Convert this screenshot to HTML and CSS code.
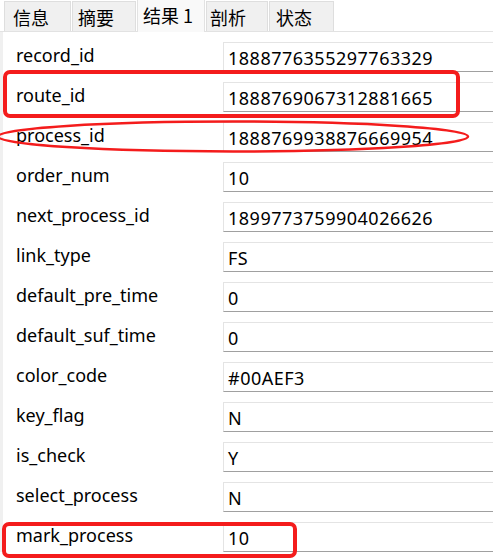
FILE: index.html
```html
<!DOCTYPE html>
<html lang="zh">
<head>
<meta charset="utf-8">
<link rel="stylesheet" href="styles.css">
</head>
<body>
<div class="page">
  <div class="tabs">
    <div class="tab t1">信息</div>
    <div class="tab t2">摘要</div>
    <div class="tab t3 active">结果 1</div>
    <div class="tab t4">剖析</div>
    <div class="tab t5">状态</div>
  </div>
  <div class="content">
    <div class="row"><div class="label">record_id</div><div class="box">1888776355297763329</div></div>
    <div class="row"><div class="label">route_id</div><div class="box">1888769067312881665</div></div>
    <div class="row"><div class="label">process_id</div><div class="box">1888769938876669954</div></div>
    <div class="row"><div class="label">order_num</div><div class="box">10</div></div>
    <div class="row"><div class="label">next_process_id</div><div class="box">1899773759904026626</div></div>
    <div class="row"><div class="label">link_type</div><div class="box">FS</div></div>
    <div class="row"><div class="label">default_pre_time</div><div class="box">0</div></div>
    <div class="row"><div class="label">default_suf_time</div><div class="box">0</div></div>
    <div class="row"><div class="label">color_code</div><div class="box">#00AEF3</div></div>
    <div class="row"><div class="label">key_flag</div><div class="box">N</div></div>
    <div class="row"><div class="label">is_check</div><div class="box">Y</div></div>
    <div class="row"><div class="label">select_process</div><div class="box">N</div></div>
    <div class="row"><div class="label">mark_process</div><div class="box">10</div></div>
  </div>
  <svg class="marks" width="493" height="559" viewBox="0 0 493 559">
    <rect x="5" y="72" width="453" height="44" rx="5" ry="5" fill="none" stroke="#f41c1c" stroke-width="4"/>
    <ellipse cx="233" cy="136.5" rx="235" ry="15" fill="none" stroke="#f41c1c" stroke-width="2.5"/>
    <rect x="4" y="524" width="291" height="32" rx="5" ry="5" fill="none" stroke="#f41c1c" stroke-width="4"/>
  </svg>
</div>
</body>
</html>
```

FILE: styles.css
```css
html, body {
  margin: 0;
  padding: 0;
  background: #ffffff;
}
.page {
  position: relative;
  width: 493px;
  height: 559px;
  overflow: hidden;
  font-family: "Noto Sans", "Noto Sans CJK SC", sans-serif;
  color: #000;
}
.tabs {
  display: flex;
  align-items: flex-end;
  height: 32px;
  padding-left: 4px;
  border-bottom: 1px solid #e2e2e2;
  box-sizing: border-box;
}
.tab {
  box-sizing: border-box;
  height: 30px;
  background: #f0f0f0;
  border: 1px solid #dedede;
  border-bottom: none;
  margin-right: 1px;
  font-family: "Noto Sans CJK SC", sans-serif;
  font-size: 18px;
  line-height: 30px;
  padding-left: 8px;
}
.t1 { width: 67px; }
.t2 { width: 64px; padding-left: 5px; }
.t3 { width: 68px; padding-left: 5px; }
.t4 { width: 62px; padding-left: 3px; }
.t5 { width: 65px; padding-left: 6px; }
.tab.active {
  background: #f9f9f9;
  margin-bottom: -1px;
  height: 33px;
  line-height: 31px;
  border-color: #e2e2e2;
}
.content {
  border-left: 3px solid #f0f0f0;
}
.row {
  display: grid;
  grid-template-columns: 207px 1fr;
  height: 40px;
  padding-left: 13px;
}
.label {
  font-size: 18px;
  line-height: 28px;
  padding-top: 9px;
  white-space: nowrap;
}
.box {
  margin-top: 10px;
  height: 30px;
  box-sizing: border-box;
  border-top: 1px solid #e4e4e4;
  border-left: 1px solid #e4e4e4;
  border-bottom: 1px solid #a0a0a0;
  font-size: 18px;
  letter-spacing: 0.5px;
  line-height: 30px;
  padding-left: 4px;
  margin-right: -20px;
  white-space: nowrap;
}
.marks {
  position: absolute;
  left: 0;
  top: 0;
  pointer-events: none;
}
```
